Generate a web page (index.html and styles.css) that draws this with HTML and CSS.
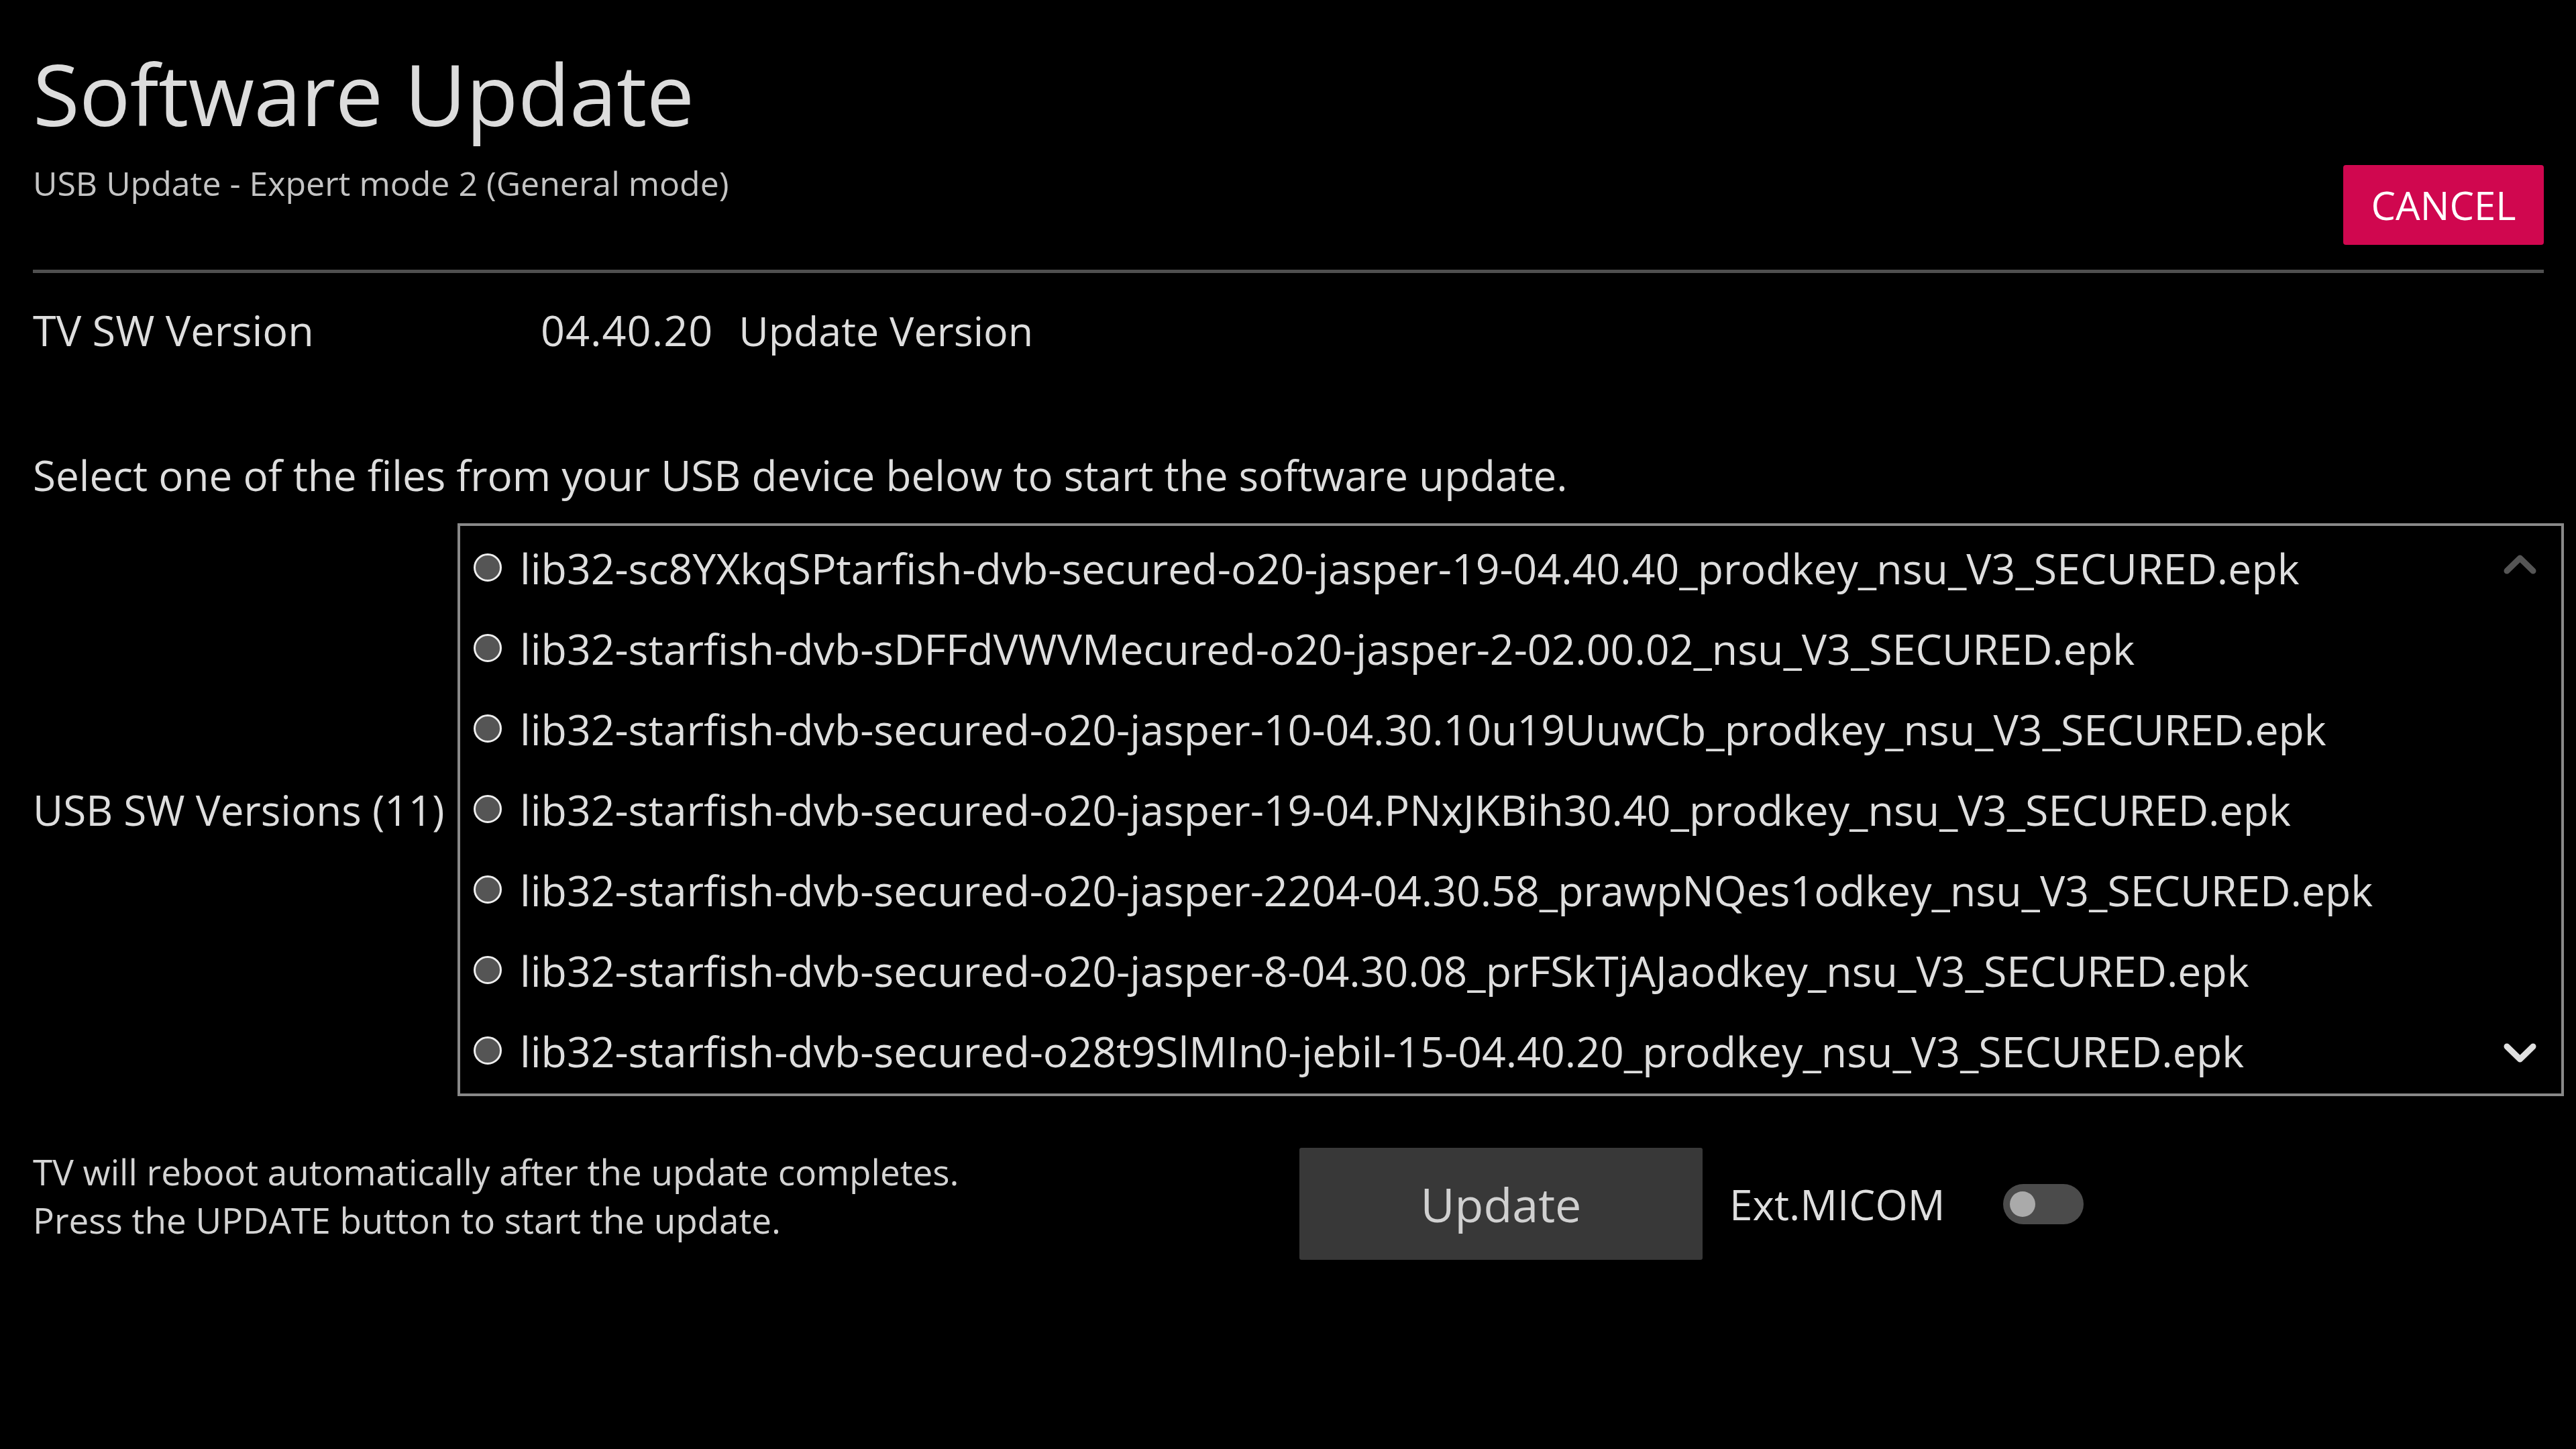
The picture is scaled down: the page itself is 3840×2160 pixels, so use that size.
FILE: index.html
```html
<!DOCTYPE html>
<html lang="en">
<head>
<meta charset="utf-8">
<title>Software Update</title>
<link rel="stylesheet" href="styles.css">
</head>
<body>
<main class="page">
  <header class="header">
    <div class="heading">
      <h1 class="title">Software Update</h1>
      <p class="subtitle">USB Update - Expert mode 2 (General mode)</p>
    </div>
    <button class="cancel">CANCEL</button>
  </header>
  <div class="divider"></div>

  <div class="version-row">
    <span class="version-label">TV SW Version</span>
    <span class="version-value">04.40.20</span>
    <span class="version-update">Update Version</span>
  </div>

  <p class="instruction">Select one of the files from your USB device below to start the software update.</p>

  <section class="usb">
    <div class="usb-label">USB SW Versions (11)</div>
    <div class="file-box">
      <ul class="file-list">
        <li class="file"><span class="radio"></span><span class="file-name">lib32-sc8YXkqSPtarfish-dvb-secured-o20-jasper-19-04.40.40_prodkey_nsu_V3_SECURED.epk</span></li>
        <li class="file"><span class="radio"></span><span class="file-name">lib32-starfish-dvb-sDFFdVWVMecured-o20-jasper-2-02.00.02_nsu_V3_SECURED.epk</span></li>
        <li class="file"><span class="radio"></span><span class="file-name">lib32-starfish-dvb-secured-o20-jasper-10-04.30.10u19UuwCb_prodkey_nsu_V3_SECURED.epk</span></li>
        <li class="file"><span class="radio"></span><span class="file-name">lib32-starfish-dvb-secured-o20-jasper-19-04.PNxJKBih30.40_prodkey_nsu_V3_SECURED.epk</span></li>
        <li class="file"><span class="radio"></span><span class="file-name">lib32-starfish-dvb-secured-o20-jasper-2204-04.30.58_prawpNQes1odkey_nsu_V3_SECURED.epk</span></li>
        <li class="file"><span class="radio"></span><span class="file-name">lib32-starfish-dvb-secured-o20-jasper-8-04.30.08_prFSkTjAJaodkey_nsu_V3_SECURED.epk</span></li>
        <li class="file"><span class="radio"></span><span class="file-name">lib32-starfish-dvb-secured-o28t9SlMIn0-jebil-15-04.40.20_prodkey_nsu_V3_SECURED.epk</span></li>
      </ul>
      <div class="scroller">
        <svg class="chev chev-up" viewBox="0 0 49 32" width="49" height="32"><polyline points="5,26 24.5,7 44,26" /></svg>
        <svg class="chev chev-down" viewBox="0 0 49 32" width="49" height="32"><polyline points="5,6 24.5,25 44,6" /></svg>
      </div>
    </div>
  </section>

  <section class="footer">
    <div class="notice">
      <p>TV will reboot automatically after the update completes.</p>
      <p>Press the UPDATE button to start the update.</p>
    </div>
    <button class="update">Update</button>
    <span class="micom">Ext.MICOM</span>
    <span class="toggle"><span class="knob"></span></span>
  </section>
</main>
</body>
</html>
```
FILE: styles.css
```css
html, body {
  margin: 0;
  padding: 0;
  background: #000;
}
body {
  width: 3840px;
  height: 2160px;
  overflow: hidden;
  font-family: "Open Sans", "Noto Sans", sans-serif;
  color: #dedede;
}
.page {
  padding: 0 48px 0 49px;
}
p, h1, ul { margin: 0; padding: 0; }

/* header */
.header {
  display: flex;
  justify-content: space-between;
}
.heading {
  padding-top: 64px;
  padding-bottom: 62px;
}
.title {
  font-size: 127px;
  line-height: 150px;
  font-weight: 400;
  color: #dcdcdc;
  letter-spacing: -0.6px;
}
.subtitle {
  margin-top: 29px;
  font-size: 50px;
  line-height: 60px;
  color: #c4c4c4;
}
.cancel {
  align-self: flex-end;
  width: 299px;
  height: 119px;
  border: 0;
  border-radius: 4px;
  background: #d0074f;
  color: #fff;
  font-family: "Open Sans", sans-serif;
  font-size: 58px;
  padding: 0;
}
.divider {
  margin-top: 37px;
  height: 5px;
  background: #4f4f4f;
}

/* version row */
.version-row {
  margin-top: 45px;
  height: 80px;
  display: flex;
  align-items: baseline;
  font-size: 63px;
  line-height: 80px;
}
.version-label {
  width: 757px;
}
.version-value {
  letter-spacing: 1px;
}
.version-update {
  margin-left: 38px;
  font-size: 61px;
}

.instruction {
  margin-top: 136px;
  font-size: 62px;
  line-height: 80px;
}

/* USB list */
.usb {
  margin-top: 32px;
  display: flex;
  align-items: center;
  margin-right: -30px;
}
.usb-label {
  width: 633px;
  font-size: 62px;
  line-height: 80px;
  white-space: nowrap;
}
.file-box {
  flex: 1;
  display: flex;
  height: 846px;
  border: 4px solid #888;
}
.file-list {
  flex: 1;
  list-style: none;
  padding: 2px 0 0 20px;
}
.file {
  height: 120px;
  display: flex;
  align-items: center;
  gap: 27px;
  font-size: 62.6px;
  white-space: nowrap;
}
.radio {
  flex: none;
  width: 36px;
  height: 36px;
  border: 3px solid #eee;
  border-radius: 50%;
  background: #555;
}
.scroller {
  display: flex;
  flex-direction: column;
  justify-content: space-between;
  padding: 41px 37px 44px 0;
}
.chev {
  display: block;
  fill: none;
  stroke-width: 9;
  stroke-linecap: round;
  stroke-linejoin: round;
}
.chev-up { stroke: #555; }
.chev-down { stroke: #e0e0e0; }

/* footer */
.footer {
  margin-top: 77px;
  display: flex;
  align-items: flex-start;
}
.notice {
  width: 1888px;
  font-size: 53px;
  line-height: 72px;
  color: #d4d4d4;
}
.update {
  width: 601px;
  height: 167px;
  border: 0;
  border-radius: 3px;
  background: #383838;
  color: #d0d0d0;
  font-family: "Open Sans", sans-serif;
  font-size: 70px;
  padding: 0;
  margin-top: 0;
}
.micom {
  margin-left: 40px;
  align-self: center;
  font-size: 62px;
  line-height: 80px;
}
.toggle {
  margin-left: 87px;
  align-self: center;
  width: 120px;
  height: 60px;
  border-radius: 30px;
  background: #4b4b4b;
  display: flex;
  align-items: center;
  padding-left: 10px;
  box-sizing: border-box;
}
.knob {
  width: 38px;
  height: 38px;
  border-radius: 50%;
  background: #aaa;
}
```
